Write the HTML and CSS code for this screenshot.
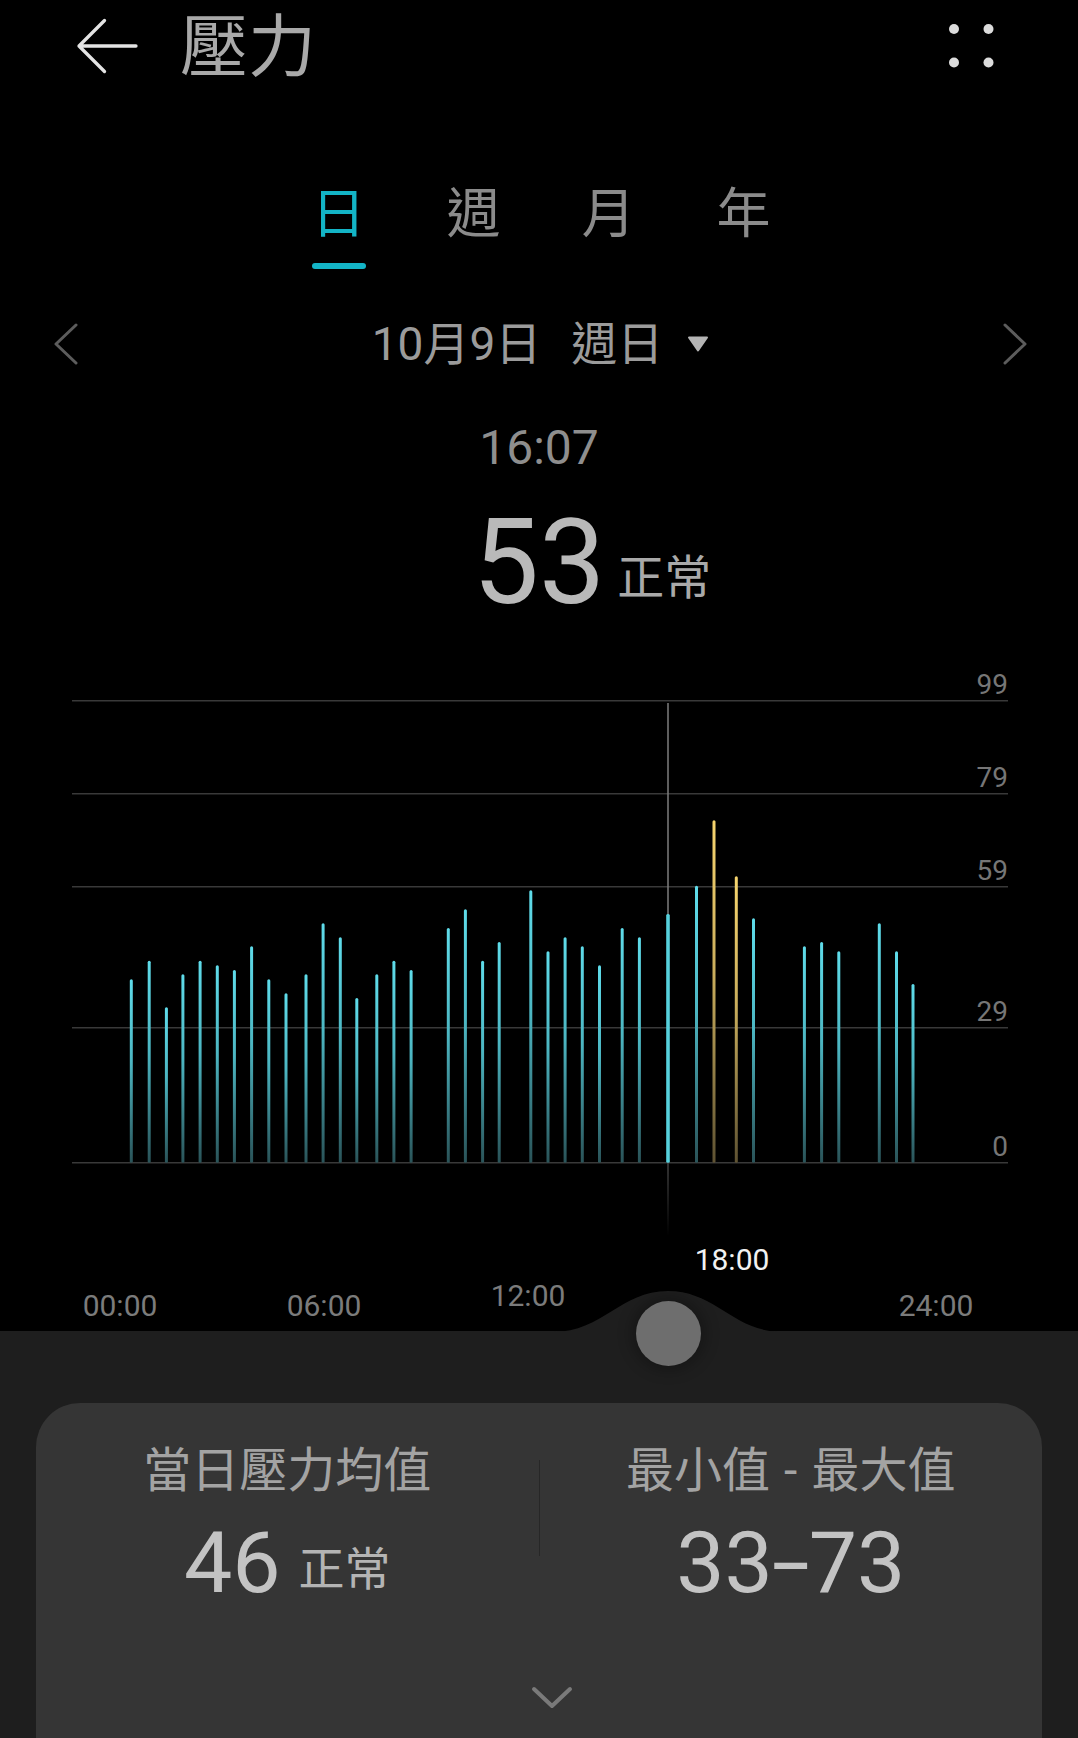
FILE: index.html
```html
<!DOCTYPE html>
<html lang="zh-Hant">
<head>
    <meta charset="UTF-8">
    <meta name="viewport" content="width=device-width, initial-scale=1.0">
    <title>壓力</title>
    <link rel="stylesheet" href="styles.css">
</head>
<body>
    <header class="topbar">
        <svg class="back" viewBox="0 0 64 58" aria-label="返回">
            <path d="M28.5 3.5 L3 29 L28.5 54.5 M3 29 L60 29" />
        </svg>
        <h1>壓力</h1>
        <svg class="more" viewBox="0 0 45 45" aria-label="更多">
            <circle cx="5" cy="5" r="5" />
            <circle cx="39.5" cy="5" r="5" />
            <circle cx="5" cy="38.5" r="5" />
            <circle cx="39.5" cy="38.5" r="5" />
        </svg>
    </header>

    <nav class="tabs">
        <span class="tab active">日</span>
        <span class="tab">週</span>
        <span class="tab">月</span>
        <span class="tab">年</span>
    </nav>

    <div class="date-row">
        <svg class="chev" viewBox="0 0 26 42"><path d="M23 2 L3 21 L23 40" /></svg>
        <div class="date">10月9日<span class="weekday">週日</span>
            <svg class="caret" viewBox="0 0 22 16"><path d="M2 1.5 H20 L11 14.5 Z" /></svg>
        </div>
        <svg class="chev" viewBox="0 0 26 42"><path d="M3 2 L23 21 L3 40" /></svg>
    </div>

    <div class="reading">
        <div class="time">16:07</div>
        <div class="value">
            <span class="num">53</span>
            <span class="unit">正常</span>
        </div>
    </div>

    <div class="chart">
        <svg viewBox="0 0 1078 580" width="1078" height="580">
            <defs>
                <linearGradient id="cyan" x1="0" y1="0" x2="0" y2="1">
                    <stop offset="0" stop-color="#5fdcea" />
                    <stop offset="0.45" stop-color="#4cb6c2" />
                    <stop offset="1" stop-color="#2a5358" />
                </linearGradient>
                <linearGradient id="amber" x1="0" y1="0" x2="0" y2="1">
                    <stop offset="0" stop-color="#f6d46e" />
                    <stop offset="0.45" stop-color="#c9ad5c" />
                    <stop offset="1" stop-color="#5e5232" />
                </linearGradient>
                <linearGradient id="fade" x1="0" y1="0" x2="0" y2="1">
                    <stop offset="0" stop-color="#454545" />
                    <stop offset="1" stop-color="#454545" stop-opacity="0" />
                </linearGradient>
            </defs>

            <g class="grid">
                <line x1="72" y1="40.7" x2="1008" y2="40.7" />
                <line x1="72" y1="133.7" x2="1008" y2="133.7" />
                <line x1="72" y1="226.7" x2="1008" y2="226.7" />
                <line x1="72" y1="367.7" x2="1008" y2="367.7" />
                <line x1="72" y1="502.7" x2="1008" y2="502.7" />
            </g>
            <g class="ylabels">
                <text x="1008" y="33.5">99</text>
                <text x="1008" y="126.5">79</text>
                <text x="1008" y="219.5">59</text>
                <text x="1008" y="360.5">29</text>
                <text x="1008" y="496">0</text>
            </g>

            <line class="cursor" x1="668" y1="43" x2="668" y2="502" />
            <rect x="667.25" y="502" width="1.5" height="74" fill="url(#fade)" />

            <g fill="url(#cyan)">
                <rect x="129.8" y="319.3" width="3" height="183.4" rx="1.5" />
                <rect x="147.7" y="300.7" width="3" height="202" rx="1.5" />
                <rect x="164.9" y="347.3" width="3" height="155.4" rx="1.5" />
                <rect x="181.4" y="314.3" width="3" height="188.4" rx="1.5" />
                <rect x="198.6" y="300.7" width="3" height="202" rx="1.5" />
                <rect x="215.8" y="305.3" width="3" height="197.4" rx="1.5" />
                <rect x="232.9" y="310" width="3" height="192.7" rx="1.5" />
                <rect x="250.1" y="286.3" width="3" height="216.4" rx="1.5" />
                <rect x="267.3" y="319.3" width="3" height="183.4" rx="1.5" />
                <rect x="284.5" y="333.3" width="3" height="169.4" rx="1.5" />
                <rect x="304.5" y="314.3" width="3" height="188.4" rx="1.5" />
                <rect x="321.6" y="263.3" width="3" height="239.4" rx="1.5" />
                <rect x="338.8" y="277.3" width="3" height="225.4" rx="1.5" />
                <rect x="355.3" y="338" width="3" height="164.7" rx="1.5" />
                <rect x="375.3" y="314.3" width="3" height="188.4" rx="1.5" />
                <rect x="392.4" y="300.7" width="3" height="202" rx="1.5" />
                <rect x="409.6" y="310" width="3" height="192.7" rx="1.5" />
                <rect x="446.8" y="268" width="3" height="234.7" rx="1.5" />
                <rect x="463.9" y="249.3" width="3" height="253.4" rx="1.5" />
                <rect x="481.1" y="300.7" width="3" height="202" rx="1.5" />
                <rect x="497.7" y="282" width="3" height="220.7" rx="1.5" />
                <rect x="529.3" y="230.3" width="3" height="272.4" rx="1.5" />
                <rect x="546.5" y="291.3" width="3" height="211.4" rx="1.5" />
                <rect x="563.6" y="277.3" width="3" height="225.4" rx="1.5" />
                <rect x="580.8" y="286.3" width="3" height="216.4" rx="1.5" />
                <rect x="598" y="305.3" width="3" height="197.4" rx="1.5" />
                <rect x="620.7" y="268" width="3" height="234.7" rx="1.5" />
                <rect x="637.9" y="277.3" width="3" height="225.4" rx="1.5" />
                <rect x="695" y="225.7" width="3" height="277" rx="1.5" />
                <rect x="752" y="258.3" width="3" height="244.4" rx="1.5" />
                <rect x="802.9" y="286.3" width="3" height="216.4" rx="1.5" />
                <rect x="820.1" y="282" width="3" height="220.7" rx="1.5" />
                <rect x="837.3" y="291.3" width="3" height="211.4" rx="1.5" />
                <rect x="877.8" y="263.3" width="3" height="239.4" rx="1.5" />
                <rect x="895" y="291.3" width="3" height="211.4" rx="1.5" />
                <rect x="911.5" y="324" width="3" height="178.7" rx="1.5" />
            </g>
            <g fill="url(#amber)">
                <rect x="712.5" y="160.3" width="3" height="342.4" rx="1.5" />
                <rect x="734.8" y="216.3" width="3" height="286.4" rx="1.5" />
            </g>
            <rect class="picked" x="666.2" y="254" width="3.6" height="248.7" rx="1.5" />
        </svg>
    </div>

    <div class="axis">
        <span>00:00</span>
        <span>06:00</span>
        <span class="near">12:00</span>
        <span class="current">18:00</span>
        <span>24:00</span>
    </div>

    <section class="panel">
        <svg class="hump" viewBox="0 0 1078 41" width="1078" height="41">
            <path d="M553 41 C603 41 620 0 668 0 C716 0 733 41 783 41 Z" />
        </svg>
        <div class="knob"></div>

        <div class="card">
            <div class="stats">
                <div class="stat">
                    <div class="label">當日壓力均值</div>
                    <div class="figure"><span class="num">46</span><span class="unit">正常</span></div>
                </div>
                <div class="divider"></div>
                <div class="stat">
                    <div class="label">最小值<span class="sep">-</span>最大值</div>
                    <div class="figure"><span class="num">33<span class="dash">-</span>73</span></div>
                </div>
            </div>
            <svg class="expand" viewBox="0 0 42 24"><path d="M3 3 L21 20 L39 3" /></svg>
        </div>
    </section>
</body>
</html>
```

FILE: styles.css
```css
* {
    box-sizing: border-box;
}

html, body {
    margin: 0;
    padding: 0;
    background-color: #000;
}

body {
    width: 1078px;
    height: 1738px;
    overflow: hidden;
    font-family: Roboto, "Noto Sans CJK TC", sans-serif;
    color: #9b9b9b;
}

/* top bar */
.topbar {
    display: flex;
    align-items: center;
    height: 92px;
    padding: 0 84px 0 76px;
}

.back {
    width: 64px;
    height: 58px;
    fill: none;
    stroke: #e4e4e4;
    stroke-width: 3.3;
    stroke-linecap: round;
    stroke-linejoin: round;
}

.topbar h1 {
    margin: 4px 0 0 40px;
    font-size: 68px;
    line-height: 68px;
    font-weight: 400;
    color: #a9a9a9;
}

.more {
    width: 45px;
    height: 45px;
    margin-left: auto;
    fill: #dcdcdc;
}

/* day / week / month / year */
.tabs {
    display: flex;
    justify-content: center;
    padding: 96px 0 0 4px;
}

.tab {
    display: flex;
    flex-direction: column;
    align-items: center;
    width: 135px;
    font-size: 54px;
    line-height: 54px;
    color: #8b8b8b;
}

.tab::after {
    content: "";
    width: 54px;
    height: 6px;
    margin-top: 21px;
    border-radius: 3px;
}

.tab.active {
    color: #13b4c6;
}

.tab.active::after {
    background-color: #13b4c6;
}

/* date selector */
.date-row {
    display: flex;
    align-items: center;
    justify-content: space-between;
    height: 60px;
    margin-top: 45px;
    padding: 0 50px 0 53px;
}

.chev {
    width: 26px;
    height: 42px;
    fill: none;
    stroke: #5c5c5c;
    stroke-width: 3;
    stroke-linecap: round;
    stroke-linejoin: round;
}

.date {
    display: flex;
    align-items: center;
    font-size: 46px;
    line-height: 60px;
    color: #9b9b9b;
}

.weekday {
    margin-left: 30px;
}

.caret {
    width: 22px;
    height: 16px;
    margin-left: 24px;
    fill: #b4b4b4;
    stroke: #b4b4b4;
    stroke-width: 2;
    stroke-linejoin: round;
}

/* current reading */
.reading {
    margin-top: 50px;
}

.time {
    text-align: center;
    font-size: 48px;
    line-height: 48px;
    color: #8e8e8e;
}

.value {
    display: grid;
    grid-template-columns: 1fr auto 1fr;
    align-items: end;
    margin-top: 32px;
}

.value .num {
    grid-column: 2;
    font-size: 118px;
    line-height: 118px;
    color: #b9b9b9;
}

.value .unit {
    grid-column: 3;
    justify-self: start;
    margin: 0 0 21px 12px;
    font-size: 47px;
    line-height: 47px;
    color: #a9a9a9;
}

/* chart */
.chart {
    margin-top: 38px;
    height: 580px;
}

.chart svg {
    display: block;
}

.grid line {
    stroke: #393939;
    stroke-width: 1.5;
}

.ylabels text {
    font-family: Roboto, sans-serif;
    font-size: 28px;
    fill: #767676;
    text-anchor: end;
}

.cursor {
    stroke: #7e7e7e;
    stroke-width: 1.5;
}

.picked {
    fill: #56d0dc;
}

/* hour labels */
.axis {
    display: grid;
    grid-template-columns: repeat(5, 204px);
    margin-top: 51px;
    padding-left: 18px;
    font-size: 30px;
    line-height: 30px;
    color: #7b7b7b;
    text-align: center;
}

.axis .near {
    transform: translateY(-10px);
}

.axis .current {
    transform: translateY(-46px);
    color: #f2f2f2;
}

/* bottom sheet */
.panel {
    position: relative;
    margin-top: 10px;
    padding: 72px 36px 0;
    height: 407px;
    background-color: #1e1e1e;
}

.hump {
    position: absolute;
    top: -40px;
    left: 0;
    fill: #1e1e1e;
}

.knob {
    position: absolute;
    top: -30px;
    left: 635.5px;
    width: 65px;
    height: 65px;
    border-radius: 50%;
    background-color: #6e6e6e;
    box-shadow: 0 0 14px 5px rgba(0, 0, 0, 0.25);
}

.card {
    height: 335px;
    padding-top: 44px;
    border-radius: 44px 44px 0 0;
    background-color: #353535;
}

.stats {
    display: grid;
    grid-template-columns: 1fr 1px 1fr;
}

.stat {
    display: flex;
    flex-direction: column;
    align-items: center;
}

.label {
    font-size: 48px;
    line-height: 48px;
    color: #a3a3a3;
}

.sep {
    margin: 0 14px;
}

.divider {
    height: 96px;
    margin-top: 13px;
    background-color: #272727;
}

.figure {
    display: flex;
    align-items: flex-end;
    margin-top: 25px;
}

.figure .num {
    font-size: 86px;
    line-height: 86px;
    color: #c3c3c3;
}

.dash {
    display: inline-block;
    margin: 0 6px;
    transform: scaleX(1.6);
}

.figure .unit {
    margin: 0 0 14px 18px;
    font-size: 46px;
    line-height: 46px;
    color: #b4b4b4;
}

.expand {
    display: block;
    width: 42px;
    height: 24px;
    margin: 80px 0 0 495px;
    fill: none;
    stroke: #7a7a7a;
    stroke-width: 4;
    stroke-linecap: round;
    stroke-linejoin: round;
}
```
